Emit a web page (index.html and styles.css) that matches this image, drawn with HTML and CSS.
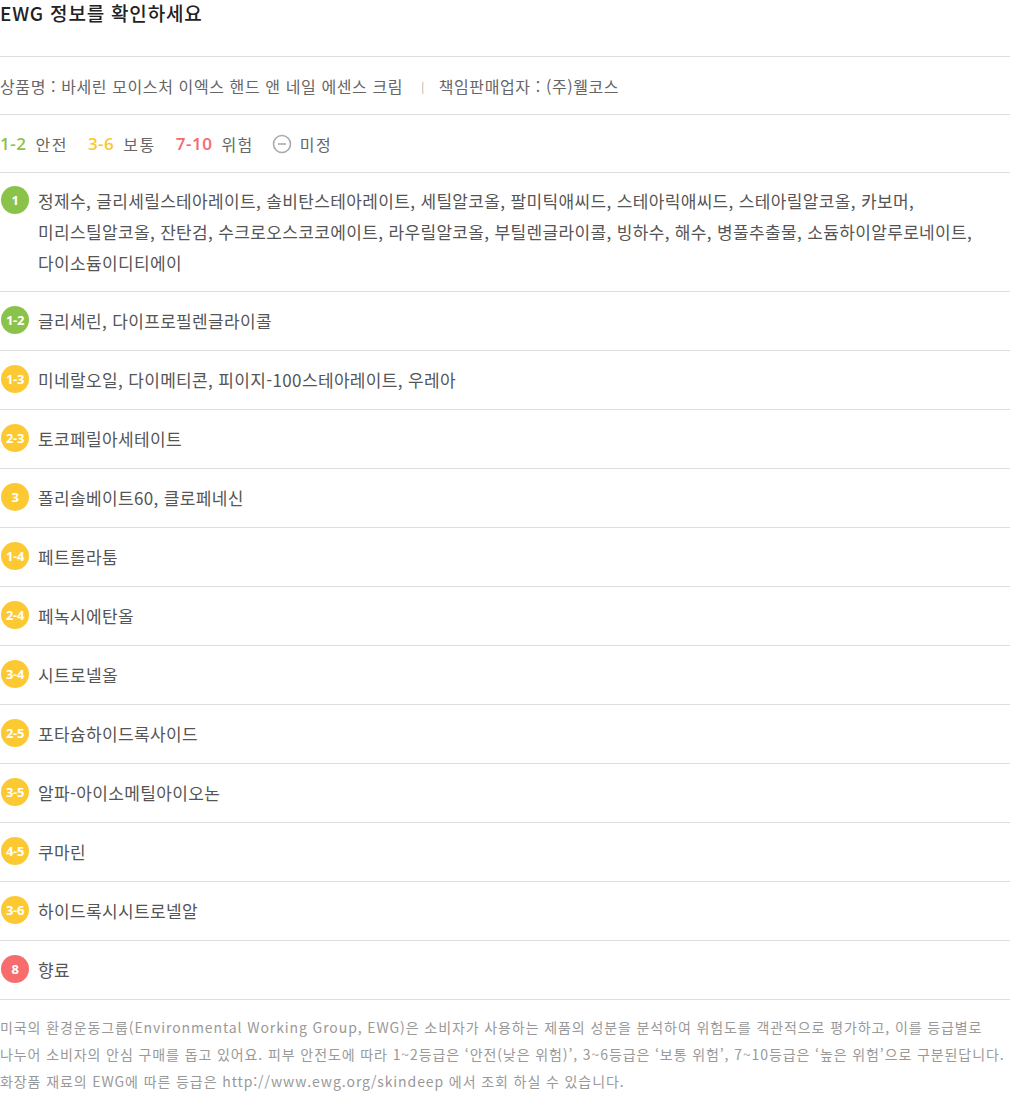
FILE: index.html
```html
<!DOCTYPE html>
<html lang="ko">
<head>
    <meta charset="UTF-8">
    <title>EWG 정보</title>
    <link rel="stylesheet" href="styles.css">
</head>
<body>
    <div class="ewg">
        <h2 class="title">EWG 정보를 확인하세요</h2>

        <div class="product">
            <span>상품명 : 바세린 모이스처 이엑스 핸드 앤 네일 에센스 크림</span>
            <span class="bar">|</span>
            <span>책임판매업자 : (주)웰코스</span>
        </div>

        <div class="legend">
            <span class="lv green">1-2</span><span class="lv-name">안전</span>
            <span class="lv yellow">3-6</span><span class="lv-name">보통</span>
            <span class="lv red">7-10</span><span class="lv-name">위험</span>
            <span class="unknown">
                <svg width="20" height="20" viewBox="0 0 20 20">
                    <circle cx="10" cy="10" r="8.5" fill="none" stroke="#aaa" stroke-width="1.6"/>
                    <line x1="6" y1="10" x2="14" y2="10" stroke="#aaa" stroke-width="1.6"/>
                </svg>
            </span><span class="lv-name">미정</span>
        </div>

        <ul class="list">
            <li>
                <span class="badge green">1</span>
                <p>정제수, 글리세릴스테아레이트, 솔비탄스테아레이트, 세틸알코올, 팔미틱애씨드, 스테아릭애씨드, 스테아릴알코올, 카보머,<br>미리스틸알코올, 잔탄검, 수크로오스코코에이트, 라우릴알코올, 부틸렌글라이콜, 빙하수, 해수, 병풀추출물, 소듐하이알루로네이트,<br>다이소듐이디티에이</p>
            </li>
            <li><span class="badge green">1-2</span><p>글리세린, 다이프로필렌글라이콜</p></li>
            <li><span class="badge yellow">1-3</span><p>미네랄오일, 다이메티콘, 피이지-100스테아레이트, 우레아</p></li>
            <li><span class="badge yellow">2-3</span><p>토코페릴아세테이트</p></li>
            <li><span class="badge yellow">3</span><p>폴리솔베이트60, 클로페네신</p></li>
            <li><span class="badge yellow">1-4</span><p>페트롤라툼</p></li>
            <li><span class="badge yellow">2-4</span><p>페녹시에탄올</p></li>
            <li><span class="badge yellow">3-4</span><p>시트로넬올</p></li>
            <li><span class="badge yellow">2-5</span><p>포타슘하이드록사이드</p></li>
            <li><span class="badge yellow">3-5</span><p>알파-아이소메틸아이오논</p></li>
            <li><span class="badge yellow">4-5</span><p>쿠마린</p></li>
            <li><span class="badge yellow">3-6</span><p>하이드록시시트로넬알</p></li>
            <li><span class="badge red">8</span><p>향료</p></li>
        </ul>

        <p class="note">미국의 환경운동그룹(Environmental Working Group, EWG)은 소비자가 사용하는 제품의 성분을 분석하여 위험도를 객관적으로 평가하고, 이를 등급별로<br>나누어 소비자의 안심 구매를 돕고 있어요. 피부 안전도에 따라 1~2등급은 ‘안전(낮은 위험)’, 3~6등급은 ‘보통 위험’, 7~10등급은 ‘높은 위험’으로 구분된답니다.<br>화장품 재료의 EWG에 따른 등급은 http://www.ewg.org/skindeep 에서 조회 하실 수 있습니다.</p>
    </div>
</body>
</html>
```

FILE: styles.css
```css
body{
    margin: 0;
    background-color: #fff;
    font-family: "Noto Sans CJK KR", "Noto Sans", sans-serif;
    color: #555;
}

.ewg{
    width: 1010px;
}

.title{
    margin: 0;
    height: 57px;
    box-sizing: border-box;
    font-size: 19px;
    font-weight: 500;
    line-height: 26px;
    letter-spacing: 0.8px;
    color: #222;
    border-bottom: 1px solid #ddd;
}

.product{
    height: 57px;
    display: flex;
    align-items: center;
    font-size: 16px;
    color: #666;
    border-bottom: 1px solid #ddd;
    letter-spacing: 0.6px;
}

.product .bar{
    font-size: 11px;
    color: #aaa;
    margin: 0 14px 0 18px;
}

.legend{
    height: 57px;
    display: flex;
    align-items: center;
    font-size: 16px;
    border-bottom: 1px solid #ddd;
}

.lv{
    font-family: "Open Sans", sans-serif;
    font-size: 17px;
    font-weight: 600;
    letter-spacing: 0.5px;
    margin-right: 9px;
}

.lv-name{
    margin-right: 20px;
    color: #666;
    letter-spacing: 1.5px;
}

.green{ color: #8bc34a; }
.yellow{ color: #fcc72f; }
.red{ color: #f4686d; }

.unknown{
    display: flex;
    margin: 0 8px 0 -2px;
}

.list{
    list-style: none;
    margin: 0;
    padding: 0;
}

.list li{
    display: flex;
    align-items: flex-start;
    padding: 13px 0 14px;
    border-bottom: 1px solid #ddd;
}

.list li:first-child{
    padding: 12px 0 13px;
}

.list p{
    margin: 0;
    font-size: 17px;
    line-height: 31px;
    letter-spacing: 0.35px;
    color: #555;
}

.badge{
    flex: none;
    width: 28px;
    height: 28px;
    margin: 1px 9px 0 1px;
    border-radius: 50%;
    display: flex;
    align-items: center;
    justify-content: center;
    font-family: "Open Sans", sans-serif;
    font-size: 13px;
    font-weight: 700;
    letter-spacing: -0.3px;
    color: #fff;
}

.badge.green{ background-color: #8bc34a; }
.badge.yellow{ background-color: #fdc933; }
.badge.red{ background-color: #f76d6d; }

.note{
    margin: 0;
    padding: 14px 0 0;
    font-size: 14px;
    line-height: 27px;
    color: #999;
    letter-spacing: 0.9px;
    white-space: nowrap;
}
```
